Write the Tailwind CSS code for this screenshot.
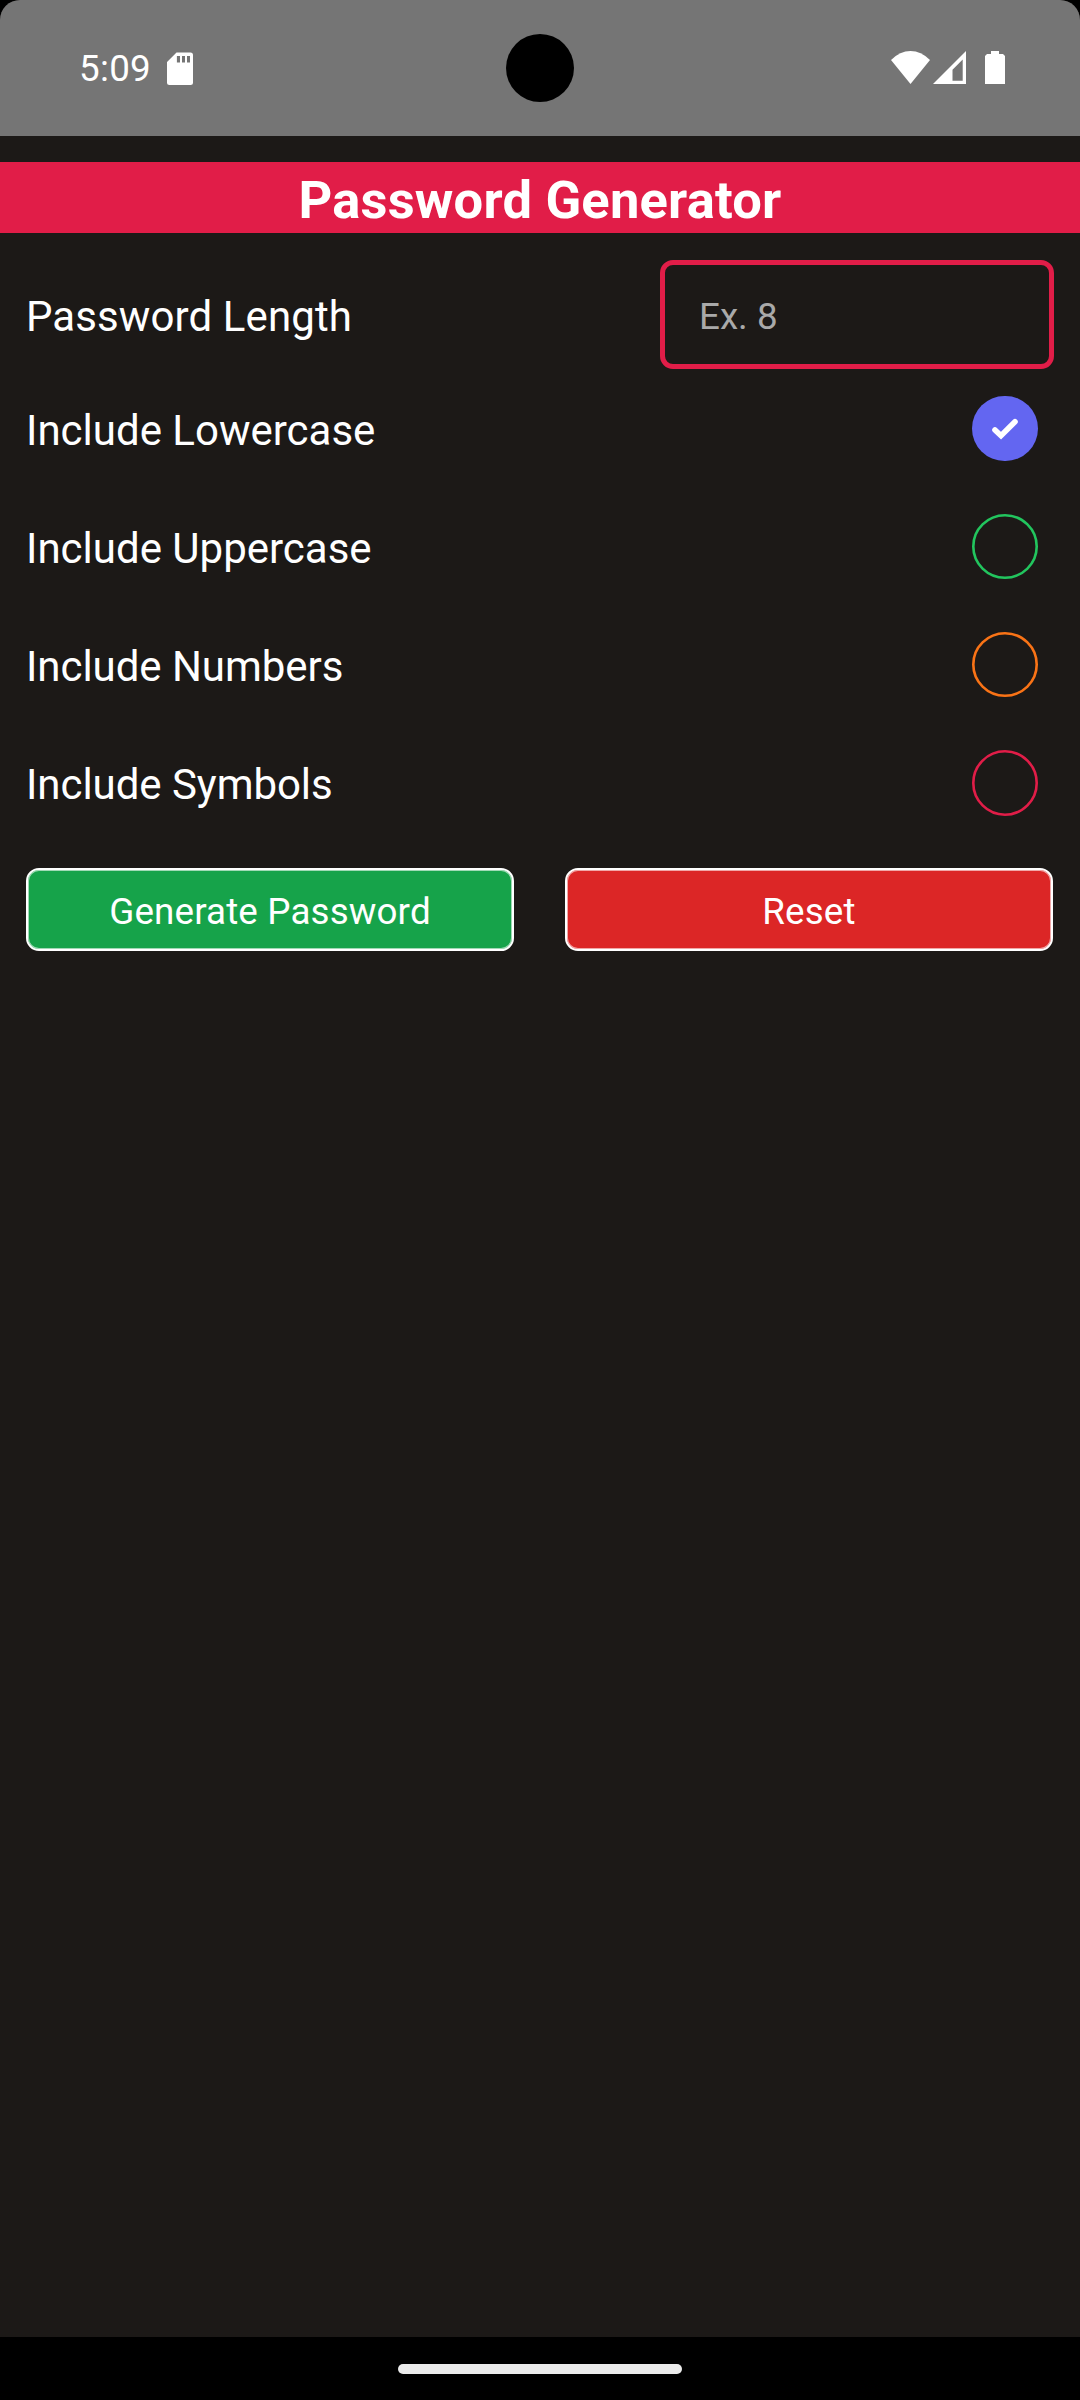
<!DOCTYPE html>
<html lang="en">
<head>
<meta charset="utf-8">
<title>Password Generator</title>
<script src="https://cdn.jsdelivr.net/npm/@tailwindcss/browser@4"></script>
</head>
<body class="bg-black">
<div class="flex h-[2400px] w-[1080px] flex-col overflow-hidden rounded-t-[20px] bg-[#1c1917] font-[Roboto,sans-serif] text-white">
  <!-- Status bar -->
  <header class="grid h-[136px] shrink-0 grid-cols-[1fr_68px_1fr] items-center bg-[#757575]">
    <div class="flex items-center pt-[2px] pl-[79px]">
      <span class="text-[36.75px] leading-[44px] tracking-[0.3px]">5:09</span>
      <svg class="mb-px ml-[16px] h-[33px] w-[26px]" viewBox="0 0 26 33"><path fill="#fff" fill-rule="evenodd" d="M9.500 .5H23.500Q26 .5 26 3V30.500Q26 33 23.500 33H2.500Q0 33 0 30.500V10ZM9.900 4V10.600H13V4ZM15 4V10.600H18V4ZM20 4V10.600H23V4Z"/></svg>
    </div>
    <div class="size-[68px] rounded-full bg-black"></div>
    <div class="flex items-center justify-end pr-[75px] pb-px">
      <svg class="h-[33px] w-[39px]" viewBox="0 0 39 33"><path fill="#fff" d="M0 9Q9 0 19.500 0T39 9L19.500 33Z"/></svg>
      <svg class="ml-[3px] h-[33px] w-[33px]" viewBox="0 0 33 33"><path fill="#fff" fill-rule="evenodd" d="M33 0V33H0ZM29.700 8.500L19.500 18.700V29.700H29.700Z"/></svg>
      <svg class="ml-[19px] h-[33px] w-[20px]" viewBox="0 0 20 33"><path fill="#fff" d="M6 0H14V3H18L20 5V33H0V5L2 3H6Z"/></svg>
    </div>
  </header>

  <h1 class="mt-[26px] h-[71px] shrink-0 bg-[#e11d48] text-center text-[52.5px] leading-[76px] font-bold tracking-[0.2px]">Password Generator</h1>

  <main class="flex grow flex-col px-[26px] pt-[27px]">
    <div class="flex h-[109px] items-center justify-between">
      <label class="pt-[3px] text-[42px] leading-[49px] tracking-[0.1px]">Password Length</label>
      <div class="flex h-[109px] w-[394px] items-center rounded-[13px] border-[5px] border-[#e11d48] pt-[4px] pl-[34px] text-[36.75px] leading-[44px] text-[#a9a9a9]">Ex. 8</div>
    </div>

    <div class="mt-[27px] flex h-[65px] items-center justify-between pr-[16px]">
      <span class="pt-[3px] text-[42px] leading-[49px]">Include Lowercase</span>
      <span class="flex h-[65px] w-[66px] items-center justify-center rounded-full bg-[#6366f1]">
        <svg class="h-[65px] w-[66px]" viewBox="0 0 66 65"><path d="M23 34L29 39.700L43 25.700" fill="none" stroke="#fff" stroke-width="5.600" stroke-linecap="round"/></svg>
      </span>
    </div>
    <div class="mt-[53px] flex h-[65px] items-center justify-between pr-[16px]">
      <span class="pt-[3px] text-[42px] leading-[49px]">Include Uppercase</span>
      <svg class="h-[65px] w-[66px]" viewBox="0 0 66 65"><ellipse cx="33" cy="32.500" rx="31.700" ry="31.200" fill="none" stroke="#22c55e" stroke-width="2.600"/></svg>
    </div>
    <div class="mt-[53px] flex h-[65px] items-center justify-between pr-[16px]">
      <span class="pt-[3px] text-[42px] leading-[49px] tracking-[-0.05px]">Include Numbers</span>
      <svg class="h-[65px] w-[66px]" viewBox="0 0 66 65"><ellipse cx="33" cy="32.500" rx="31.700" ry="31.200" fill="none" stroke="#f97316" stroke-width="2.600"/></svg>
    </div>
    <div class="mt-[53px] flex h-[66px] items-center justify-between pr-[16px]">
      <span class="pt-[3px] text-[42px] leading-[49px] tracking-[-0.05px]">Include Symbols</span>
      <svg class="size-[66px]" viewBox="0 0 66 66"><circle cx="33" cy="33" r="31.700" fill="none" stroke="#e11d48" stroke-width="2.600"/></svg>
    </div>

    <div class="mt-[52px] flex justify-between pr-px">
      <button class="h-[83px] w-[488px] rounded-[13px] border-2 border-white bg-[#16a34a] pt-[4px] text-[36.75px] leading-[44px] tracking-[0.15px] inset-shadow-[0_0_0_1px_rgba(255,255,255,0.6)]">Generate Password</button>
      <button class="h-[83px] w-[488px] rounded-[13px] border-2 border-white bg-[#dc2626] pt-[4px] text-[36.75px] leading-[44px] tracking-[0.15px] inset-shadow-[0_0_0_1px_rgba(255,255,255,0.6)]">Reset</button>
    </div>
  </main>

  <!-- Gesture navigation bar -->
  <footer class="flex h-[63px] shrink-0 justify-center bg-black pt-[27px]">
    <div class="h-[10px] w-[284px] rounded-[5px] bg-[#ebebeb]"></div>
  </footer>
</div>
</body>
</html>
